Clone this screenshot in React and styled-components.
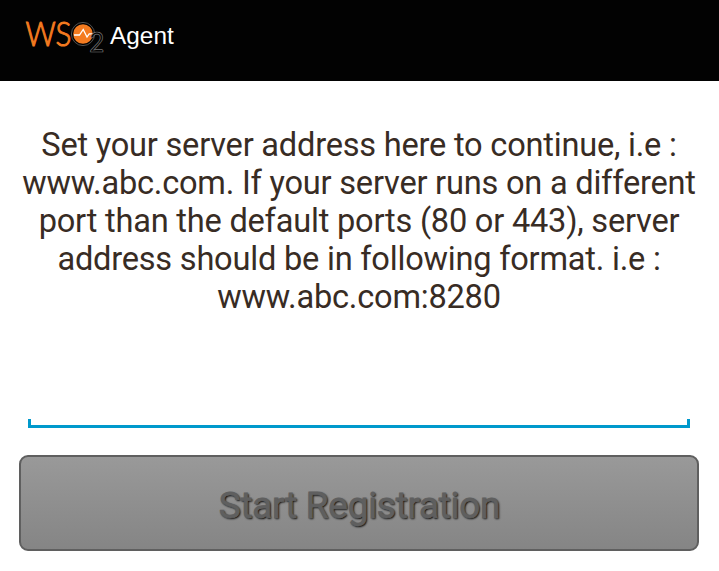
import React from "react";
import styled, { createGlobalStyle } from "styled-components";

const GlobalStyle = createGlobalStyle`
  * { box-sizing: border-box; }
  body { margin: 0; background: #fff; }
`;

const Screen = styled.main`
  width: 719px;
  height: 571px;
  display: flex;
  flex-direction: column;
  overflow: hidden;
  background: #fff;
  font-family: Roboto, sans-serif;
`;

const Header = styled.header`
  height: 81px;
  flex: none;
  display: flex;
  align-items: flex-start;
  gap: 2px;
  padding-left: 20px;
  background: #020202;
`;

const LogoMark = styled.svg`
  display: block;
  flex: none;
`;

const Title = styled.h1`
  margin: 22px 0 0;
  color: #fff;
  font: 400 24.4px/28px "Liberation Sans", sans-serif;
`;

const Content = styled.section`
  flex: 1;
  display: flex;
  flex-direction: column;
  padding: 45px 20px 0 19px;
`;

const Instructions = styled.p`
  margin: 0 -9px;
  height: 190px;
  color: #382c24;
  font-size: 32.6px;
  letter-spacing: -0.22px;
  line-height: 38px;
  text-align: center;
  white-space: nowrap;
`;

const AddressInput = styled.input`
  appearance: none;
  height: 9px;
  margin: 103px 9px 0;
  padding: 0;
  border: 0;
  outline: 0;
  border-radius: 0;
  background:
    linear-gradient(#0099cc, #0099cc) left / 3px 100% no-repeat,
    linear-gradient(#0099cc, #0099cc) right / 3px 100% no-repeat,
    linear-gradient(#0099cc, #0099cc) bottom / 100% 3px no-repeat;
`;

const RegisterButton = styled.button`
  height: 96px;
  flex: none;
  margin: 27px 0 0;
  padding: 6px 0 0 1px;
  border: 2px solid #5f5f5f;
  border-radius: 9px;
  background: linear-gradient(#999, #858585);
  color: #5f5f5f;
  font: 400 37px/42px Roboto, sans-serif;
  letter-spacing: -0.3px;
  -webkit-text-stroke: 0.8px #5f5f5f;
  text-shadow: 1px 1px 2px #000;
`;

function Logo() {
  return (
    <LogoMark width="88" height="81" viewBox="20 0 88 81" role="img" aria-label="WSO2">
      <text
        x="25.5"
        y="45.5"
        fill="#f47b20"
        stroke="#f47b20"
        strokeWidth="1"
        fontFamily="Lato, sans-serif"
        fontWeight="300"
        fontSize="32.5"
        textLength="46"
        lengthAdjust="spacingAndGlyphs"
      >
        WS
      </text>
      <circle cx="83" cy="34" r="11.6" fill="#020202" stroke="#666" strokeWidth="0.8" />
      <circle cx="83" cy="34" r="9.8" fill="#f47b20" />
      <path d="M74 35h5.5l3.7-5.5 3.8 7.5 2.2-3.2H94" fill="none" stroke="#fff" strokeWidth="1.3" />
      <text x="89.3" y="52" fill="#020202" stroke="#777" strokeWidth="0.7" fontFamily="Lato, sans-serif" fontSize="26">2</text>
    </LogoMark>
  );
}

export default function App() {
  return (
    <Screen>
      <GlobalStyle />
      <Header>
        <Logo />
        <Title>Agent</Title>
      </Header>
      <Content>
        <Instructions>
          Set your server address here to continue, i.e :<br />
          www.abc.com. If your server runs on a different<br />
          port than the default ports (80 or 443), server<br />
          address should be in following format. i.e :<br />
          www.abc.com:8280
        </Instructions>
        <AddressInput aria-label="Server address" />
        <RegisterButton>Start Registration</RegisterButton>
      </Content>
    </Screen>
  );
}
